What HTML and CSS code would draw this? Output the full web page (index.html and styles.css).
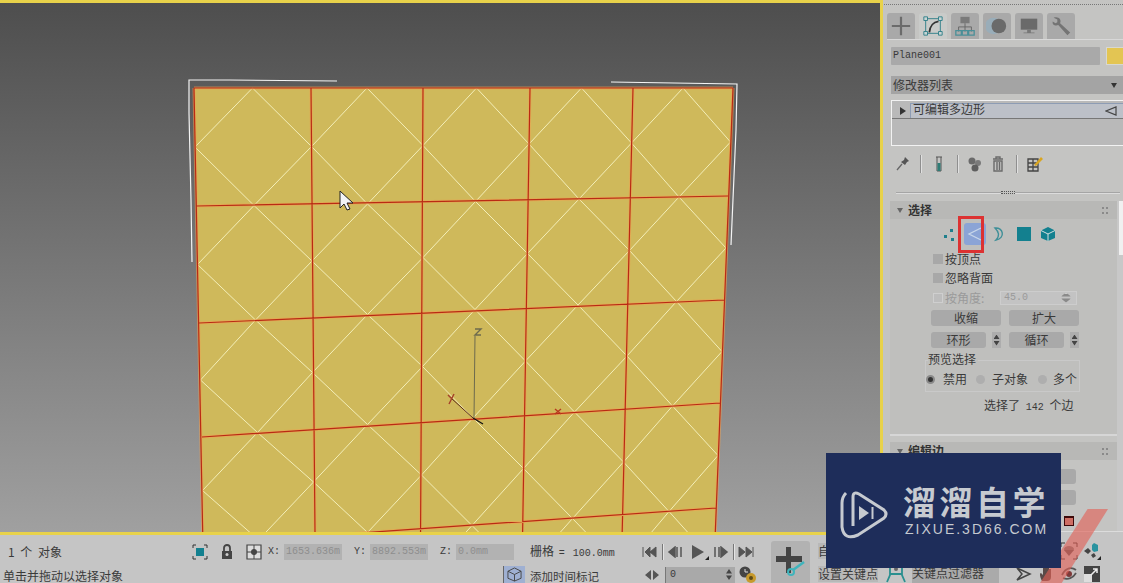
FILE: index.html
```html
<!DOCTYPE html>
<html lang="zh-CN">
<head>
<meta charset="utf-8">
<title>3ds Max</title>
<link rel="stylesheet" href="styles.css">
</head>
<body>
<div class="app">
  <div class="top">
    <main class="viewport">
      <svg class="scene" viewBox="0 3 880 529">
        <defs>
          <linearGradient id="bg" x1="0" y1="0" x2="0" y2="1">
            <stop offset="0" stop-color="#4e4e4e"/>
            <stop offset="1" stop-color="#a0a0a0"/>
          </linearGradient>
        </defs>
        <rect x="0" y="3" width="880" height="529" fill="url(#bg)"/>
        <path d="M194 88L733 88L712 615L205 650Z" fill="#cfb95b"/>
        <path fill="none" stroke="#f3eeb8" stroke-width="1" d="M252.5 88L311.5 146.5L254 205.5L195 147Z M367 88L423 145.5L367.5 204L311.5 146.5Z M476.5 88L529 144L475.5 201.5L423 145.5Z M581.5 88L631.5 143L579 199L529 144Z M683 88L730.5 142L679 197L631.5 143Z
        M254 205.5L312 261L255.5 320L197.5 264.5Z M367.5 204L423 257.5L367.5 314.5L312 261Z M475.5 201.5L527.5 253.5L475 309.5L423 257.5Z M579 199L629.5 250.5L578 305L527.5 253.5Z M679 197L726 248L676.5 301.5L629.5 250.5Z
        M255.5 320L312.5 372.5L257.5 432.5L200.5 380Z M367.5 314.5L422.5 366.5L367.5 424.5L312.5 372.5Z M475 309.5L525.5 361L473 418L422.5 366.5Z M578 305L627 356L574.5 412L525.5 361Z M676.5 301.5L722 351.5L672.5 406L627 356Z
        M257.5 432.5L313.5 482L258.5 540L202.5 490.5Z M367.5 424.5L421.5 475L367.5 532.5L313.5 482Z M473 418L523.5 468.5L472 525.5L421.5 475Z M574.5 412L623.5 462L572.5 518.5L523.5 468.5Z M672.5 406L718 455.5L669 511.5L623.5 462Z
        M258.5 540L315 589.5L204 597Z M367.5 532.5L420.5 582.5L315 589.5Z M472 525.5L522 575.5L420.5 582.5Z M572.5 518.5L621 568.5L522 575.5Z M669 511.5L714 561.5L621 568.5Z"/>
        <g fill="none">
          <path stroke="#f0a050" stroke-opacity=".6" stroke-width="3" d="M194 88L733 88 M196 206L728 196 M199 323L724 300 M202 437L720 403 M203 544L716 508 M194 88L205 650 M311 88L316 643 M423 88L420 636 M530 88L521 629 M633 88L620 622 M733 88L712 615"/>
          <path stroke="#b92a14" stroke-width="1.2" d="M194 88L733 88 M196 206L728 196 M199 323L724 300 M202 437L720 403 M203 544L716 508 M194 88L205 650 M311 88L316 643 M423 88L420 636 M530 88L521 629 M633 88L620 622 M733 88L712 615"/>
          <path stroke="#f4f4f4" stroke-width="1.2" d="M192 262L191 200L189 113L189 80L229 80L337 81 M611 82L737 84L736 130L731 245"/>
          <path stroke="#6d6a4e" stroke-width="1" d="M475 336L474 418"/>
          <path stroke="#5a2a15" stroke-width="1" d="M451 398L473 418"/>
          <path stroke="#111" stroke-width="1.2" d="M473 418L483 424"/>
          <path stroke="#6d6a4e" stroke-width="1.4" d="M475 329H481L475 335H481"/>
          <path stroke="#a5412a" stroke-width="1.4" d="M448 395L452 399M454 394L449 404"/>
          <path stroke="#b8391f" stroke-width="1.4" d="M555 409L561 414M561 409L555 414"/>
        </g>
        <path d="M340 191V208L344 204L347 210L350 209L347 203L353 203Z" fill="#f2f4f8" stroke="#222" stroke-width="1"/>
      </svg>
    </main>

    <aside class="panel">
      <div class="dots-top"></div>
      <nav class="tabs">
        <div class="tab"><svg viewBox="0 0 24 24" width="22" height="22"><path d="M12 2V22M2 12H22" stroke="#6b6b6b" stroke-width="2.4"/></svg></div>
        <div class="tab tab-on"><svg viewBox="0 0 24 24" width="22" height="22"><path d="M4 4H20V20H4Z" fill="none" stroke="#2e7f88" stroke-width="1"/><path d="M2 2h4v4H2zM18 2h4v4h-4zM2 18h4v4H2zM18 18h4v4h-4z" fill="#c8d4d4" stroke="#2e7f88"/><path d="M8 19C9 11 12 8 18 7" fill="none" stroke="#333" stroke-width="2"/></svg></div>
        <div class="tab"><svg viewBox="0 0 24 24" width="22" height="22"><path d="M7 2H17V9H7Z" fill="#7a7a7a"/><path d="M12 9V13M5 18V13H19V18M12 13V18" fill="none" stroke="#666"/><path d="M2 17H8V22H2ZM9 17H15V22H9ZM16 17H22V22H16Z" fill="none" stroke="#4a8f98" stroke-width="1.4"/></svg></div>
        <div class="tab"><svg viewBox="0 0 24 24" width="22" height="22"><circle cx="8" cy="12" r="9" fill="#8fb0c4" opacity=".6"/><circle cx="14" cy="12" r="8" fill="#6a6a6a"/></svg></div>
        <div class="tab"><svg viewBox="0 0 24 24" width="22" height="22"><path d="M3 4H21V16H3Z" fill="#6a6a6a"/><path d="M10 16H14V19H18V20H6V19H10Z" fill="#777"/></svg></div>
        <div class="tab"><svg viewBox="0 0 24 24" width="22" height="22"><path d="M4 3L8 5V8L6 9L3 7C2 11 6 12 9 11L19 22L22 19L11 9C13 5 9 1 4 3Z" fill="#747474"/></svg></div>
      </nav>

      <div class="name-row">
        <div class="name-input">Plane001</div>
        <div class="swatch"></div>
      </div>
      <div class="modlist"><span>修改器列表</span><i class="down"></i></div>

      <div class="stack">
        <div class="stack-row">
          <i class="right"></i>
          <div class="stack-item"><span class="stack-name">可编辑多边形</span>
            <svg viewBox="0 0 12 12" width="12" height="12"><path d="M11 2V10L1 6Z" fill="none" stroke="#444" stroke-width="1.2"/></svg>
          </div>
        </div>
      </div>

      <div class="toolbar">
        <svg class="t1" viewBox="0 0 14 16" width="14" height="16"><path d="M9 1L13 5L11 6L9 9L5 6L8 4Z" fill="#555"/><path d="M6 8L1 14" stroke="#666" stroke-width="1.3"/></svg>
        <b class="sep"></b>
        <svg class="t2" viewBox="0 0 8 16" width="8" height="16"><path d="M1 1H7M2 1V15H6V1" fill="none" stroke="#555"/><path d="M2.5 7H5.500V15H2.500Z" fill="#2f7d76"/></svg>
        <b class="sep"></b>
        <svg class="t3" viewBox="0 0 16 16" width="16" height="16"><circle cx="5" cy="5" r="3.500" fill="#6a6a6a"/><circle cx="11" cy="7" r="3" fill="#7a7a7a"/><circle cx="8" cy="12" r="3.500" fill="#5e5e5e"/></svg>
        <svg class="t4" viewBox="0 0 12 16" width="12" height="16"><path d="M1 3H11M4 3V1H8V3M2 5H10V15H2ZM5 6V14M7.500 6V14" fill="none" stroke="#6b6b6b" stroke-width="1.400"/></svg>
        <b class="sep sep-3"></b>
        <svg class="t5" viewBox="0 0 16 16" width="16" height="16"><path d="M1 3H11V15H1ZM1 7H11M1 11H11M6 3V15" fill="none" stroke="#444" stroke-width="1.300"/><path d="M7 9L14 1L16 3L9 10Z" fill="#d9a520"/></svg>
      </div>

      <div class="divider"><span></span></div>

      <div class="scroll-wrap">
        <div class="rollouts">
          <section class="rollout first">
            <header class="rhead"><i class="rarrow"></i><strong>选择</strong><em class="grip"></em></header>
            <div class="subobj">
              <div class="so"><svg viewBox="0 0 16 16" width="16" height="16"><path d="M2 9h3v3H2zM8 3h3v3H8zM9 12h3v3H9z" fill="#1f7f8c"/></svg></div>
              <div class="so so-on"><svg viewBox="0 0 16 16" width="16" height="16"><path d="M14 2L2 8L14 14" fill="none" stroke="#c8d6ea" stroke-width="1.300"/></svg></div>
              <div class="so"><svg viewBox="0 0 16 16" width="16" height="16"><path d="M4 2C12 1 15 12 5 14C9 10 8 6 4 2Z" fill="none" stroke="#3f8f98" stroke-width="1.400"/></svg></div>
              <div class="so"><svg viewBox="0 0 14 14" width="14" height="14"><path d="M0 0H14V14H0Z" fill="#13808f"/></svg></div>
              <div class="so"><svg viewBox="0 0 16 16" width="16" height="16"><path d="M8 1L15 4.500V12L8 15L1 12V4.500Z" fill="#13808f"/><path d="M1 4.500L8 8L15 4.500M8 8V15" fill="none" stroke="#d5dfe0" stroke-width="1"/></svg></div>
              <div class="redmark"></div>
            </div>
            <label class="chk"><i></i>按顶点</label>
            <label class="chk"><i></i>忽略背面</label>
            <div class="chk chk-off"><i></i><span class="angle-label">按角度:</span><div class="spin-off"><span>45.0</span><i class="updown"></i></div></div>
            <div class="btnrow"><div class="btn b-wide">收缩</div><div class="btn b-wide b2">扩大</div></div>
            <div class="btnrow btnrow2">
              <div class="btn b-mid">环形</div><div class="spinner"><i class="updown"></i></div>
              <div class="btn b-mid b3">循环</div><div class="spinner"><i class="updown"></i></div>
            </div>
            <fieldset class="group">
              <div class="glabel">预览选择</div>
              <div class="radios">
                <i class="radio radio-on"></i><span class="r1">禁用</span>
                <i class="radio r2"></i><span class="r3">子对象</span>
                <i class="radio r4"></i><span class="r5">多个</span>
              </div>
            </fieldset>
            <div class="selinfo">选择了 <span class="num">142</span> 个边</div>
          </section>
          <section class="rollout">
            <header class="rhead"><i class="rarrow"></i><strong>编辑边</strong><em class="grip"></em></header>
            <div class="edit-btn"></div>
            <div class="edit-btn"></div>
            <div class="colorchip"></div>
          </section>
        </div>
        <div class="scrollbar"><div class="thumb"></div></div>
      </div>
    </aside>
  </div>

  <footer class="status">
    <div class="st-left">
      <div class="st-row r-a">
        <span class="count">1 个 对象</span>
        <svg class="ic-sel" viewBox="0 0 16 16" width="16" height="16"><path d="M1 4V1H4M12 1H15V4M15 12V15H12M4 15H1V12" fill="none" stroke="#333"/><path d="M4 4H12V12H4Z" fill="#13808f"/></svg>
        <svg class="ic-lock" viewBox="0 0 12 16" width="12" height="16"><path d="M3 7V4C3 0 9 0 9 4V7" fill="none" stroke="#444" stroke-width="1.800"/><path d="M1 7H11V15H1Z" fill="#444"/><circle cx="6" cy="10.500" r="1.500" fill="#ccc"/></svg>
        <svg class="ic-abs" viewBox="0 0 16 16" width="16" height="16"><path d="M1 1H15V15H1Z" fill="#ddd" stroke="#444" stroke-width="1.200"/><path d="M8 1V15M1 8H15" stroke="#444"/><circle cx="8" cy="8" r="3" fill="#444"/></svg>
        <span class="axis ax-x">X:</span><span class="coord c-x">1653.636m</span>
        <span class="axis ax-y">Y:</span><span class="coord c-y">8892.553m</span>
        <span class="axis ax-z">Z:</span><span class="coord c-z">0.0mm</span>
        <span class="grid-size">栅格 <span class="num">= 100.0mm</span></span>
        <div class="play">
          <svg viewBox="0 0 16 12" width="16" height="12"><path d="M1 1V11M14 1L8 6L14 11ZM8 1L3 6L8 11Z" fill="#555" stroke="#555"/></svg>
          <b class="vsep"></b>
          <svg viewBox="0 0 16 12" width="16" height="12"><path d="M8 1L2 6L8 11ZM10 1V11M14 1V11" fill="#555" stroke="#555" stroke-width="1.500"/></svg>
          <svg class="big-play" viewBox="0 0 18 16" width="18" height="16"><path d="M1 1L13 8L1 15Z" fill="#555"/><path d="M18 16H14L18 12Z" fill="#222"/></svg>
          <svg viewBox="0 0 16 12" width="16" height="12"><path d="M2 1V11M6 1V11M8 1L14 6L8 11Z" fill="#555" stroke="#555" stroke-width="1.500"/></svg>
          <b class="vsep"></b>
          <svg viewBox="0 0 16 12" width="16" height="12"><path d="M1 1L7 6L1 11ZM8 1L14 6L8 11ZM15 1V11" fill="#555" stroke="#555"/></svg>
        </div>
      </div>
      <div class="st-row r-b">
        <span class="prompt">单击并拖动以选择对象</span>
        <div class="tm-icon"><svg viewBox="0 0 16 16" width="15" height="15"><path d="M8 1L15 4.500V12L8 15L1 12V4.500Z" fill="none" stroke="#444"/><path d="M1 4.500L8 8L15 4.500M8 8V15" fill="none" stroke="#444"/></svg></div>
        <span class="tm-text">添加时间标记</span>
        <svg class="ic-lr" viewBox="0 0 14 10" width="14" height="10"><path d="M6 0L0 5L6 10ZM8 0L14 5L8 10Z" fill="#555"/></svg>
        <div class="frame"><span class="num">0</span><i class="updown"></i></div>
        <svg class="ic-time" viewBox="0 0 18 18" width="18" height="18"><circle cx="6" cy="6" r="5.500" fill="#444"/><path d="M6 3V6H9" stroke="#ddd" fill="none"/><circle cx="12" cy="12" r="5" fill="#c79a2d"/><circle cx="12" cy="12" r="2" fill="#5d4a18"/></svg>
      </div>
    </div>
    <div class="bigkey"><svg viewBox="0 0 30 30" width="30" height="30"><path d="M10 0H15V9H26V15H15V26H10V15H0V9H10Z" fill="#444"/><path d="M17 23L28 15" stroke="#3fb4bc" stroke-width="2.500"/><circle cx="15" cy="25" r="3" fill="none" stroke="#3fb4bc" stroke-width="2"/></svg></div>
    <div class="st-right">
      <div class="st-row r-c">
        <span class="auto">自动关键点</span>
        <div class="navs">
          <svg viewBox="0 0 18 18" width="18" height="18"><path d="M1 5V1H5M13 1H17V5M17 13V17H13M5 17H1V13" fill="none" stroke="#333"/><ellipse cx="9" cy="7" rx="5" ry="3" fill="#777"/><path d="M4 8L9 14L14 8Z" fill="#555"/></svg>
          <svg viewBox="0 0 18 18" width="18" height="18"><path d="M11 1L15 3V9L11 10L9 8V3Z" fill="#2a93a0"/><path d="M1 9L5 6L8 9L5 12ZM8 13L11 11L13 14L10 16Z" fill="#444"/><path d="M18 18H14L18 14Z" fill="#222"/></svg>
        </div>
      </div>
      <div class="st-row r-d">
        <span class="setkey">设置关键点</span>
        <svg class="ic-filter" viewBox="0 0 22 18" width="22" height="18"><path d="M5 2V10L2 17M17 2V10L20 17M5 9H17" fill="none" stroke="#2a8f8f" stroke-width="1.800"/><circle cx="11" cy="4" r="2" fill="#666"/></svg>
        <span class="filter">关键点过滤器</span>
        <div class="navs">
          <svg viewBox="0 0 18 18" width="18" height="18"><path d="M3 3L16 9L3 15L8 9Z" fill="none" stroke="#444" stroke-width="1.500"/></svg>
          <svg viewBox="0 0 18 18" width="18" height="18"><path d="M5 16C2 10 3 8 4 8L6 10V2H8V8V1H10V8V2H12V9V4H14V12C14 15 12 16 10 16Z" fill="#5a4a48"/></svg>
          <svg viewBox="0 0 18 18" width="18" height="18"><path d="M2 10C6 2 12 2 16 5M3 13C8 15 13 13 16 8" fill="none" stroke="#555" stroke-width="1.800"/><circle cx="9" cy="9" r="3" fill="#7d3a3a"/></svg>
          <svg viewBox="0 0 18 18" width="18" height="18"><path d="M1 1H17V17H1Z" fill="#444"/><path d="M1 17V9H9V17Z" fill="#ddd"/><path d="M8 10L14 4M10 4H14V8" fill="none" stroke="#eee" stroke-width="1.500"/></svg>
        </div>
      </div>
    </div>
  </footer>

  <div class="stripe"></div>
  <div class="logo">
    <svg class="logo-mark" viewBox="838 484 52 54" width="52" height="54"><path d="M853 523V494Q853 488 859 491L884 507Q888 511 884 515L858 532Q844 538 842 524V500Q842 494 846 490" fill="none" stroke="#c6cad0" stroke-width="3"/><path d="M859 503L869 510L859 517Z" fill="#c6cad0"/><path d="M872.500 504V516" stroke="#c6cad0" stroke-width="2"/></svg>
    <div class="logo-text">
      <div class="logo-cn">溜溜自学</div>
      <div class="logo-en">ZIXUE.3D66.COM</div>
    </div>
  </div>
</div>
</body>
</html>
```
FILE: styles.css
```css
* { box-sizing: border-box; }
html, body { margin: 0; padding: 0; }
body {
  width: 1123px;
  height: 583px;
  overflow: hidden;
  background: #c5c5c5;
  color: #3a3a3a;
  font: 12px/16px "Noto Sans CJK SC", "Liberation Sans", sans-serif;
}
i, em { font-style: normal; display: block; }
svg { display: block; flex: none; }
.app { position: relative; width: 1123px; height: 583px; overflow: hidden; }
.num { font: 10px/16px "Liberation Mono", monospace; }

/* top area */
.top { display: flex; height: 535px; }
.viewport {
  width: 883px;
  height: 535px;
  border-top: 3px solid #e8d24a;
  border-right: 3px solid #e8d24a;
  border-bottom: 3px solid #e8d24a;
}
.scene { width: 880px; height: 529px; }

/* command panel */
.panel { width: 240px; height: 532px; overflow: hidden; background: #c4c4c2; border-bottom: 1px solid #dcdcdc; }
.dots-top { height: 1px; margin: 4px 0 0 1px; border-top: 1px dotted #777; }
.tabs { display: flex; gap: 4px; height: 27px; margin: 8px 0 0 4px; border-bottom: 1px solid #d8d8d8; }
.tab { width: 28px; height: 26px; background: #a9a9a9; border-radius: 3px 3px 0 0; display: flex; align-items: center; justify-content: center; }
.tab-on { background: #c9cbc9; }
.name-row { display: flex; height: 18px; margin: 7px 0 0 8px; }
.name-input { width: 209px; padding-left: 2px; background: #a9a9a9; font: 10px/17px "Liberation Mono", monospace; border-radius: 1px; }
.swatch { width: 17px; margin-left: 6px; background: #e3c553; border: 1px solid #d8d8d0; border-right: 0; }
.modlist { display: flex; align-items: center; justify-content: space-between; height: 18px; margin: 11px 0 0 8px; padding: 0 6px 0 2px; background: #a4a4a4; }
.down { width: 0; height: 0; border: 3.5px solid transparent; border-top: 5px solid #333; border-bottom: 0; }
.stack { height: 46px; margin: 6px 0 0 8px; background: #b9b9b9; border: 1px solid #f2f2f2; border-right: 0; padding-top: 2px; }
.stack-row { display: flex; align-items: center; height: 16px; border-bottom: 1px solid #777; }
.right { width: 0; height: 0; margin-left: 8px; border: 4px solid transparent; border-left: 6px solid #333; border-right: 0; }
.stack-item { display: flex; justify-content: space-between; align-items: center; width: 213px; height: 15px; margin-left: 4px; padding: 0 6px 0 2px; background: #bcc0c8; border-left: 1px solid #8d9cb4; border-top: 1px solid #8d9cb4; }
.stack-name { margin-top: -4px; }
.toolbar { display: flex; align-items: center; height: 18px; margin: 9px 0 0 13px; }
.sep { width: 1px; height: 18px; background: #8f8f8f; box-shadow: 1px 0 #e0e0e0; }
.t1 { margin-right: 10px; }
.t2 { margin: 0 14px; }
.t3 { margin: 0 4px 0 9px; }
.t4 { margin-left: 5px; }
.sep-3 { margin-left: 12px; }
.t5 { margin-left: 10px; }
.divider { height: 1px; margin: 19px 3px 0 13px; background: #a5a5a5; box-shadow: 0 1px #dcdcdc; display: flex; justify-content: center; }
.divider span { width: 14px; height: 3px; margin-top: -1px; background: #c4c4c2; border-top: 1px dotted #555; border-bottom: 1px dotted #555; }
.scroll-wrap { display: flex; margin-top: 8px; }
.rollouts { width: 234px; padding-left: 7px; }
.rollout { position: relative; }
.first { height: 235px; border-bottom: 2px solid #d6d6d6; margin-bottom: 6px; background: #bfbfbd; }
.rhead { display: flex; align-items: center; height: 18px; background: #b8b8b6; }
.rarrow { width: 0; height: 0; margin-left: 7px; border: 3.500px solid transparent; border-top: 5px solid #666; border-bottom: 0; }
.rhead strong { margin-left: 5px; font-size: 12px; font-weight: 700; color: #333; }
.grip { width: 6px; height: 7px; margin-left: auto; margin-right: 9px; border-top: 2px dotted #8a8a8a; border-bottom: 2px dotted #8a8a8a; }
.subobj { position: relative; display: flex; gap: 2.500px; height: 22px; margin: 4px 0 0 49px; }
.so { width: 22px; height: 22px; display: flex; align-items: center; justify-content: center; }
.so-on { background: #8ba4d6; border-radius: 3px; }
.redmark { position: absolute; left: 19px; top: -7px; width: 26px; height: 37px; border: 3px solid #dc3232; }
.chk { display: flex; align-items: center; height: 19px; padding-left: 43px; }
.chk:first-of-type { margin-top: 4px; }
.chk i { width: 10px; height: 10px; margin-right: 2px; background: #a8a8a8; }
.chk-off { margin-top: 1px; color: #9a9a9a; }
.chk-off i { background: #bdbdbd; border: 1px solid #cfcfcf; }
.angle-label { width: 55px; }
.spin-off { display: flex; align-items: center; justify-content: space-between; width: 77px; height: 14px; padding: 0 3px 0 3px; background: #c3c3c3; border: 1px solid #cdcdcd; font: 10px/12px "Liberation Mono", monospace; }
.spin-off .updown { background: #8a8a8a; }
.updown { width: 6px; height: 11px; background: #444; clip-path: polygon(50% 0, 100% 40%, 0 40%, 50% 0, 50% 100%, 0 60%, 100% 60%, 50% 100%); flex: none; }
.btnrow { display: flex; align-items: center; height: 16px; margin: 3px 0 0 41px; }
.btnrow2 { margin-top: 6px; }
.btn { height: 16px; background: #a9a9a9; border-radius: 3px; text-align: center; line-height: 15px; }
.b-wide { width: 70px; }
.b2 { margin-left: 8px; }
.b-mid { width: 55px; }
.spinner { display: flex; align-items: center; justify-content: center; width: 9px; height: 16px; margin-left: 6px; background: #adadad; }
.b3 { margin-left: 8px; }
.group { width: 155px; height: 32px; margin: 12px 0 0 35px; padding: 0; border: 1px solid #c9c9c9; }
.glabel { width: 50px; height: 14px; margin: -9px 0 0 2px; line-height: 14px; background: #bfbfbd; }
.radios { display: flex; align-items: center; height: 16px; margin-top: 5px; }
.radio { width: 9px; height: 9px; border-radius: 50%; background: #aeaeae; }
.radio-on { background: #333; border: 2px solid #8a8a8a; }
.r1 { margin-left: 8px; }
.r2 { margin-left: 9px; }
.r3 { margin-left: 7px; }
.r4 { margin-left: 10px; }
.r5 { margin-left: 6px; }
.selinfo { height: 16px; margin: 5px 0 0 94px; white-space: nowrap; word-spacing: 3px; }
.edit-btn { width: 86px; height: 15px; margin: 6px 0 0 100px; background: #a9a9a9; border-radius: 3px; }
.rhead + .edit-btn { margin-top: 9px; }
.colorchip { width: 10px; height: 10px; margin: 11px 0 0 174px; background: #cf6e64; border: 1px solid #3d0a0a; border-top-width: 2px; }
.scrollbar { width: 6px; height: 330px; padding-left: 2px; background: #c8c8c8; }
.thumb { height: 54px; background: #f0f0f0; }

/* status bar */
.status { display: flex; height: 48px; }
.st-left { width: 771px; overflow: hidden; }
.st-row { display: flex; align-items: center; }
.r-a { height: 18px; margin-top: 8px; }
.r-b { height: 17px; margin-top: 5px; }
.count { width: 184px; margin-left: 8px; word-spacing: 3px; }
.ic-lock { margin-left: 13px; }
.ic-abs { margin-left: 13px; }
.axis { width: 16px; font: 10px/16px "Liberation Mono", monospace; }
.ax-x { margin-left: 6px; }
.ax-y { margin-left: 12px; }
.ax-z { margin-left: 12px; }
.coord { width: 58px; height: 16px; padding-left: 2px; background: #b2b2b2; color: #8e8e8e; font: 10px/16px "Liberation Mono", monospace; overflow: hidden; white-space: nowrap; }
.grid-size { width: 112px; margin-left: 16px; white-space: nowrap; word-spacing: 2px; }
.play { display: flex; align-items: center; gap: 4px; }
.big-play { margin: 0 0 0 4px; }
.vsep { width: 1px; height: 16px; background: #777; box-shadow: 1px 0 #e4e4e4; }
.prompt { width: 500px; margin-left: 3px; padding-top: 2px; white-space: nowrap; }
.tm-icon { display: flex; align-items: center; justify-content: center; width: 22px; height: 17px; background: #9fb0d2; border-left: 1px solid #666; }
.tm-text { width: 115px; margin-left: 5px; padding-top: 2px; font-size: 11.5px; white-space: nowrap; }
.frame { display: flex; align-items: center; justify-content: space-between; width: 70px; height: 16px; margin-left: 6px; padding: 0 3px 0 4px; background: #a9a9a9; border-left: 1px solid #777; }
.ic-time { margin-left: 4px; }
.bigkey { display: flex; align-items: center; justify-content: center; width: 39px; height: 42px; margin-top: 6px; background: #b2b2b2; border-radius: 3px 3px 0 0; }
.st-right { width: 313px; overflow: hidden; }
.auto { width: 60px; margin-left: 8px; background: #b8b8b8; white-space: nowrap; }
.setkey { width: 60px; margin-left: 8px; white-space: nowrap; background: #b8b8b8; }
.ic-filter { margin-left: 7px; }
.filter { width: 87px; height: 18px; margin-left: 5px; background: #aaa; white-space: nowrap; }
.navs { display: flex; gap: 5px; margin-left: auto; margin-right: 22px; }
.navs svg { width: 18px; height: 18px; }
.r-c { height: 18px; margin-top: 7px; }
.r-d { height: 18px; margin-top: 5px; }

/* overlays */
.stripe { position: absolute; left: 1040px; top: 509px; width: 68px; height: 74px; background: rgba(226, 96, 86, .62); clip-path: polygon(70% 0, 100% 0, 32% 100%, 0 100%); }
.logo { position: absolute; left: 826px; top: 453px; display: flex; width: 235px; height: 115px; padding: 32px 0 0 12px; background: #1e2d5a; color: #c6cad0; }
.logo-mark { margin-top: 2px; }
.logo-text { margin-left: 15px; }
.logo-cn { font: 700 33px/32px "Noto Sans CJK SC", sans-serif; letter-spacing: 3.500px; white-space: nowrap; margin-left: -2px; }
.logo-en { margin-top: 6px; font: 14px/13px "Liberation Sans", sans-serif; letter-spacing: 2px; white-space: nowrap; }
```
